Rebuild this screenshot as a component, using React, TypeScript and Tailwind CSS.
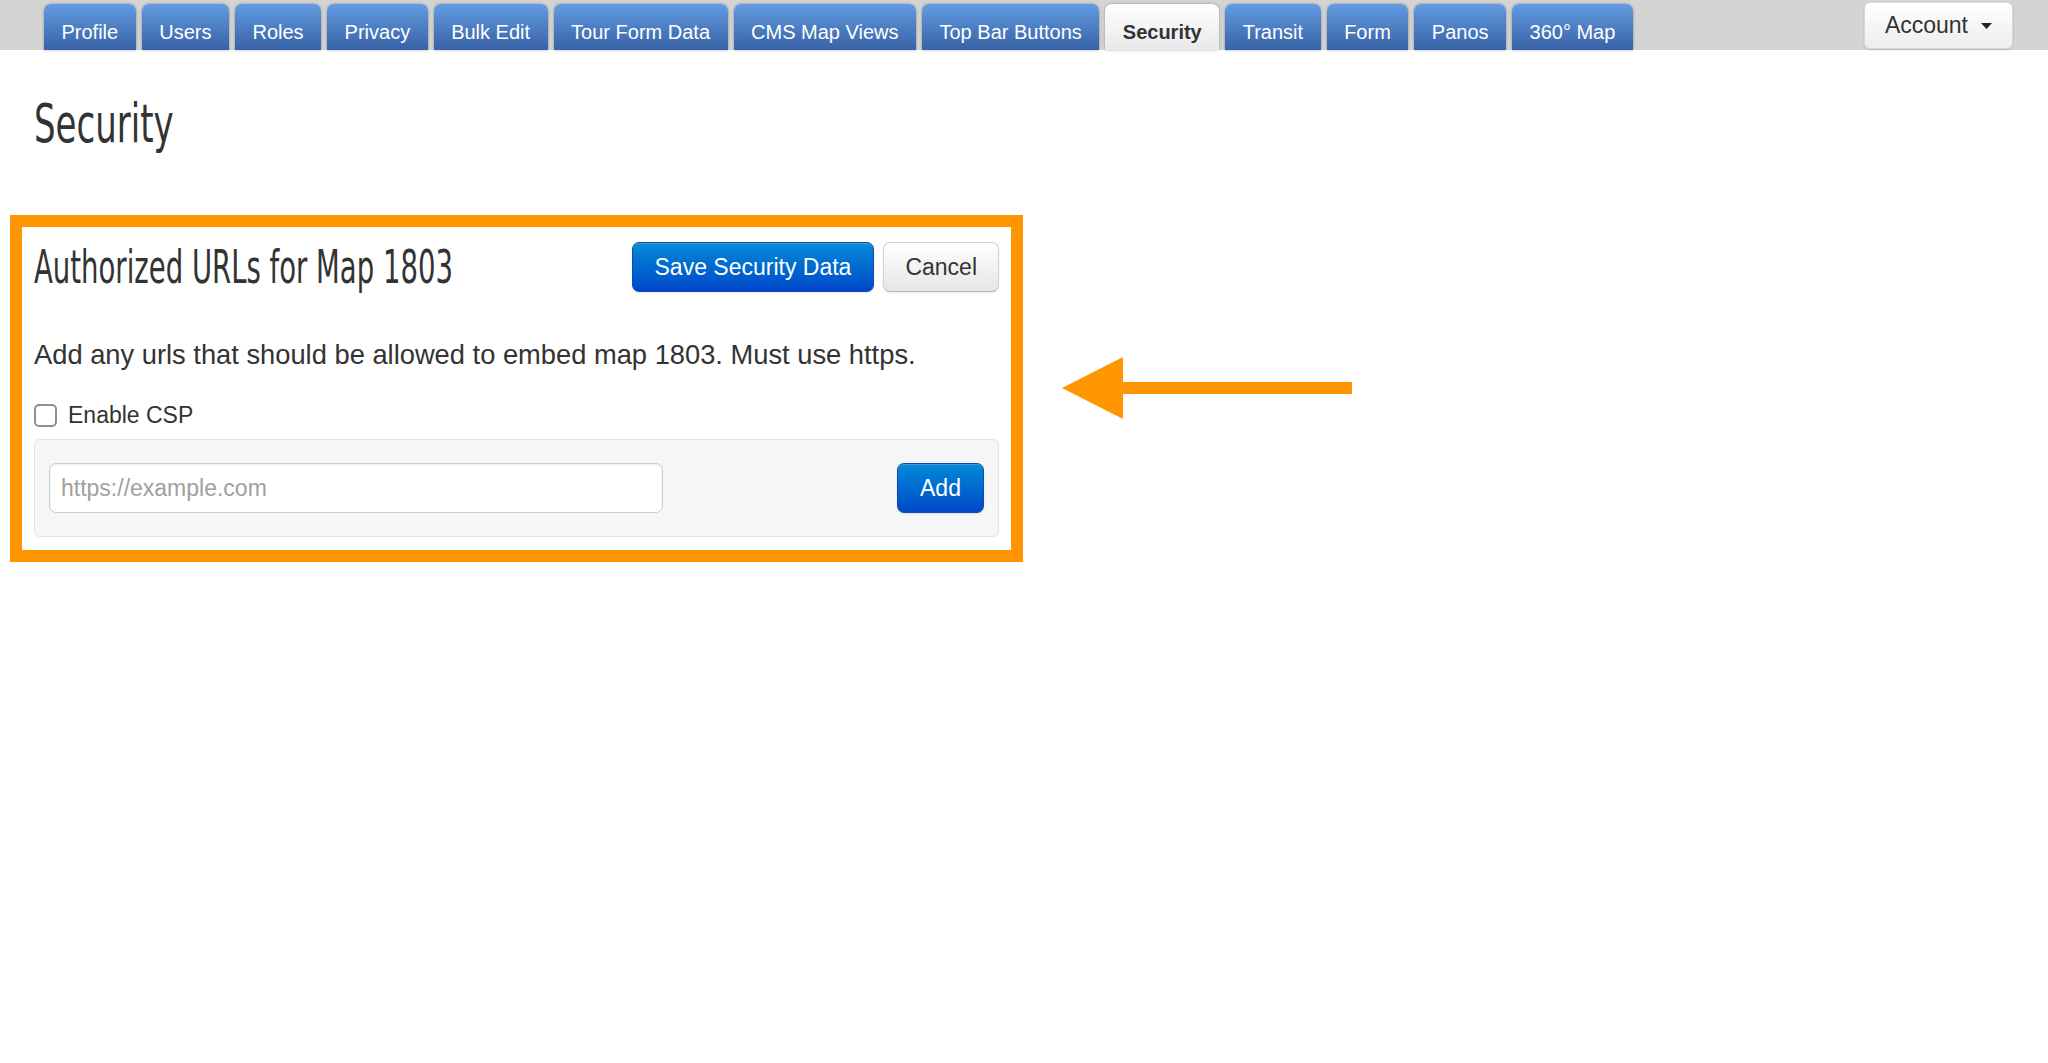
const tabs = [
  'Profile',
  'Users',
  'Roles',
  'Privacy',
  'Bulk Edit',
  'Tour Form Data',
  'CMS Map Views',
  'Top Bar Buttons',
  'Security',
  'Transit',
  'Form',
  'Panos',
  '360° Map',
]

function TopBar() {
  return (
    <div className="flex h-[50px] items-end justify-between bg-[#d4d4d4] pl-[44px] pr-[35px]">
      <nav className="flex h-[46px] gap-[6px]">
        {tabs.map((t) =>
          t === 'Security' ? (
            <div
              key={t}
              className="rounded-t-[7px] bg-gradient-to-b from-white to-[#e9e9e9] px-[17.5px] pt-[16px] pb-[6px] text-[20px] leading-[24px] font-bold text-[#333] shadow-[0_0_3px_rgba(0,0,0,0.3)]"
            >
              {t}
            </div>
          ) : (
            <div
              key={t}
              className="rounded-t-[7px] bg-gradient-to-b from-[#639ce2] to-[#3862a5] px-[17.5px] pt-[16px] pb-[6px] text-[20px] leading-[24px] text-white shadow-[0_0_3px_rgba(0,0,0,0.35)]"
            >
              {t}
            </div>
          ),
        )}
      </nav>
      <button className="mt-[2px] mb-[1px] flex h-[47px] items-center self-start rounded-[6px] border border-[#d8d8d8] bg-gradient-to-b from-white to-[#ededed] px-[20px] text-[23px] text-[#333] shadow-[0_1px_2px_rgba(0,0,0,0.15)]">
        Account
        <svg width="11" height="6" viewBox="0 0 11 6" className="ml-[13px]">
          <polygon points="0,0 11,0 5.5,6" fill="#222" />
        </svg>
      </button>
    </div>
  )
}

function Btn({ primary, children }: { primary?: boolean; children: React.ReactNode }) {
  return primary ? (
    <button className="h-[50px] shrink-0 whitespace-nowrap rounded-[7px] border border-[#0a4bb4] bg-gradient-to-b from-[#0a8ad6] to-[#0046c9] px-[22px] text-[23px] text-white shadow-[inset_0_1px_0_rgba(255,255,255,0.2),0_1px_2px_rgba(0,0,0,0.1)]">
      {children}
    </button>
  ) : (
    <button className="h-[50px] shrink-0 whitespace-nowrap rounded-[7px] border border-[#cfcfcf] border-b-[#b5b5b5] bg-gradient-to-b from-white to-[#e6e6e6] px-[21px] text-[23px] text-[#333] shadow-[0_1px_2px_rgba(0,0,0,0.08)]">
      {children}
    </button>
  )
}

export default function App() {
  return (
    <div className="relative min-h-[1063px] bg-white font-['Liberation_Sans',Arial,sans-serif] text-[#333]">
      <TopBar />

      <h1 className="mt-[44px] ml-[34px] inline-block origin-left scale-x-[0.7] font-['Liberation_Sans_Narrow','DejaVu_Sans_Condensed',sans-serif] text-[54px] leading-[60px] font-normal text-[#333]">
        Security
      </h1>

      <section className="mt-[61px] ml-[10px] w-[1013px] border-[12px] border-[#ff9500] px-[12px] pt-[15px] pb-[13px]">
        <div className="flex items-center justify-between gap-[9px]">
          <h2 className="min-w-0 flex-1 origin-left scale-x-[0.665] font-['Liberation_Sans_Narrow','DejaVu_Sans_Condensed',sans-serif] text-[46px] leading-[50px] font-normal whitespace-nowrap text-[#333]">
            Authorized URLs for Map 1803
          </h2>
          <div className="flex shrink-0 gap-[9px]">
            <Btn primary>Save Security Data</Btn>
            <Btn>Cancel</Btn>
          </div>
        </div>

        <p className="mt-[45px] text-[27.3px] leading-[36px] text-[#333]">
          Add any urls that should be allowed to embed map 1803. Must use https.
        </p>

        <label className="mt-[27px] flex h-[30px] items-center">
          <span className="h-[23px] w-[23px] rounded-[5px] border-2 border-[#8d8d95] bg-white" />
          <span className="ml-[11px] text-[23px] leading-[30px]">Enable CSP</span>
        </label>

        <div className="mt-[9px] flex items-center justify-between rounded-[6px] border border-[#e3e3e3] bg-[#f6f6f6] py-[23px] pr-[14px] pl-[14px]">
          <input
            className="h-[50px] w-[614px] rounded-[7px] border border-[#cccccc] bg-white px-[11px] text-[23px] text-[#555] shadow-[inset_0_1px_2px_rgba(0,0,0,0.08)] outline-none placeholder:text-[#a0a0a0]"
            placeholder="https://example.com"
          />
          <div className="w-[87px]">
            <Btn primary>Add</Btn>
          </div>
        </div>
      </section>

      {/* annotation arrow */}
      <svg className="absolute top-[357px] left-[1062px]" width="290" height="62" viewBox="0 0 290 62">
        <polygon points="0,31 61,0 61,62" fill="#ff9500" />
        <rect x="60" y="25" width="230" height="12" fill="#ff9500" />
      </svg>
    </div>
  )
}
